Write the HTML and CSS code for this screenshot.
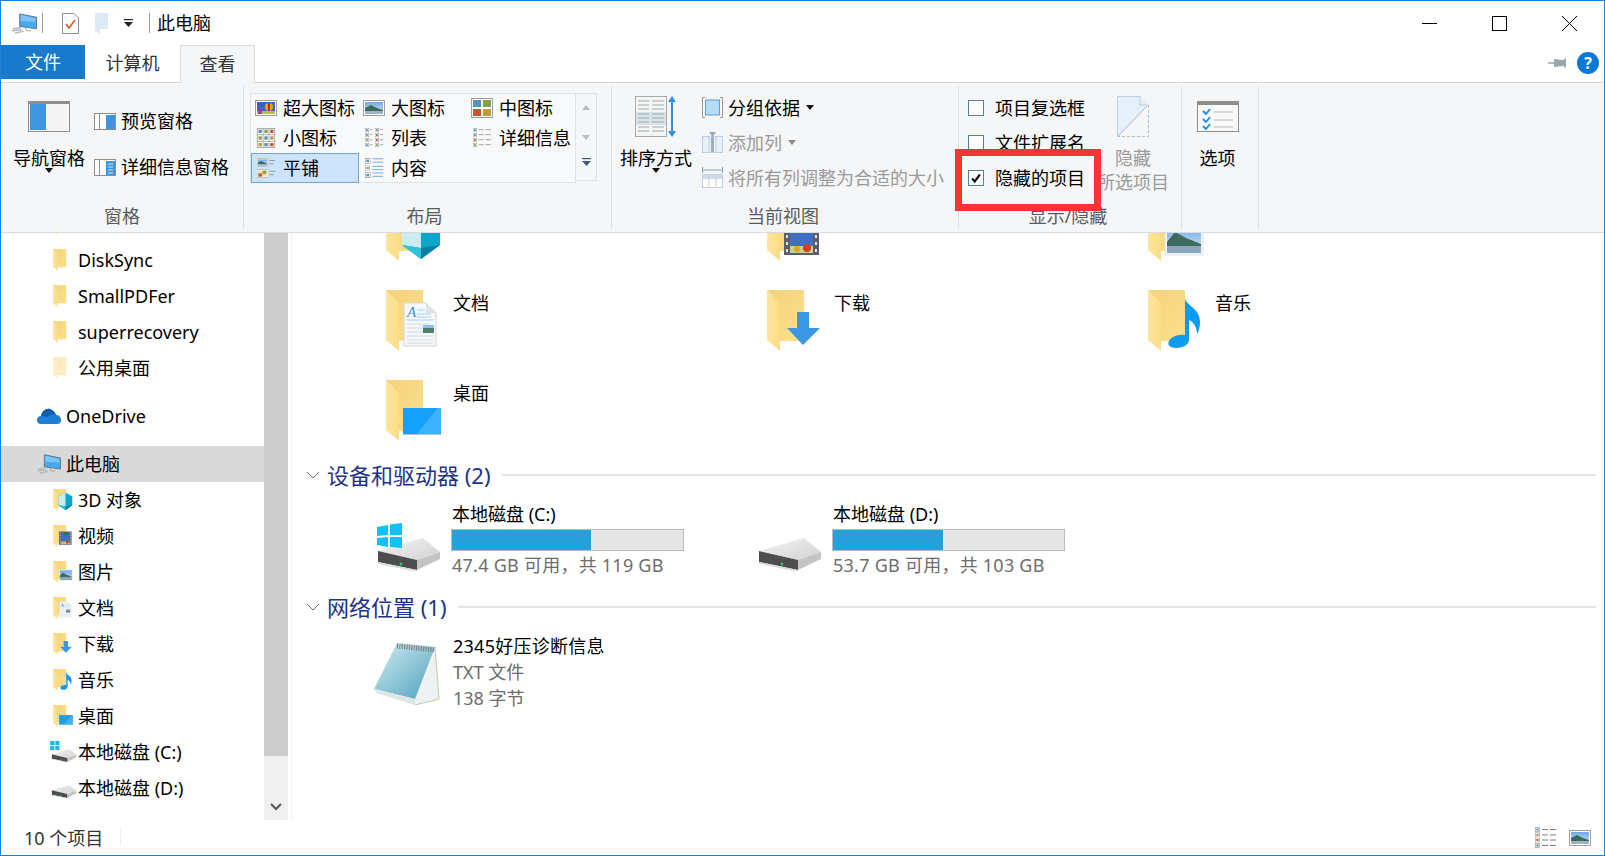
FILE: index.html
```html
<!DOCTYPE html>
<html lang="zh-CN">
<head>
  <meta charset="UTF-8" />
  <title>此电脑</title>
  <link rel="stylesheet" href="styles.css">
</head>
<body>
  <svg class="sprites" aria-hidden="true">
    <defs>
      <linearGradient id="fback" x1="0" y1="0" x2="1" y2="1"><stop offset="0" stop-color="#f6d27a"/><stop offset="1" stop-color="#fbdf8e"/></linearGradient>
      <linearGradient id="fflap" x1="0" y1="0" x2="1" y2="0"><stop offset="0" stop-color="#fee69f"/><stop offset="1" stop-color="#fcdc86"/></linearGradient>
      <linearGradient id="sky" x1="0" y1="0" x2="0" y2="1"><stop offset="0" stop-color="#6fa9ea"/><stop offset="1" stop-color="#d9e8f2"/></linearGradient>
      <linearGradient id="note" x1="0" y1="0" x2="1" y2="1"><stop offset="0" stop-color="#d4eef3"/><stop offset="1" stop-color="#4f9fbd"/></linearGradient>
      <linearGradient id="hddtop" x1="0" y1="0" x2="1" y2="1"><stop offset="0" stop-color="#f4f4f4"/><stop offset="1" stop-color="#d2d2d2"/></linearGradient>

      <g id="fb">
        <rect x="0" y="0" width="37" height="51" fill="url(#fback)"/>
        <polygon points="0,0 13,13 13,61 0,50" fill="url(#fflap)"/>
      </g>
      <symbol id="f-plain" viewBox="0 0 70 64"><use href="#fb"/></symbol>
      <symbol id="f-3d" viewBox="0 0 70 64"><use href="#fb"/>
        <polygon points="16,20 35,10 54,20 54,45 35,59 16,45" fill="#0aa6cc"/>
        <polygon points="16,20 35,10 35,48 16,45" fill="#c9eef2"/>
        <polygon points="16,45 35,48 35,59" fill="#2fc4da"/>
        <polygon points="54,45 35,48 35,59" fill="#0d7fa0"/>
      </symbol>
      <symbol id="f-video" viewBox="0 0 70 64"><use href="#fb"/>
        <rect x="17" y="18" width="35" height="37" fill="#5b5f66"/>
        <rect x="23" y="20" width="23" height="33" fill="#3f6fc4"/>
        <rect x="23" y="46" width="23" height="7" fill="#c9d28a"/>
        <circle cx="40" cy="48" r="4" fill="#d83c22"/>
        <circle cx="30" cy="49" r="3" fill="#e8a020"/>
        <circle cx="36" cy="24" r="5" fill="#2f6d33"/>
        <path d="M19 21h2v3h-2zM19 28h2v3h-2zM19 35h2v3h-2zM19 42h2v3h-2zM19 49h2v3h-2zM48 21h2v3h-2zM48 28h2v3h-2zM48 35h2v3h-2zM48 42h2v3h-2zM48 49h2v3h-2z" fill="#e3e3e3"/>
      </symbol>
      <symbol id="f-pic" viewBox="0 0 70 64"><use href="#fb"/>
        <rect x="17" y="24" width="38" height="31" fill="#f2f4f6" stroke="#dfe3e6"/>
        <rect x="19" y="26" width="34" height="27" fill="url(#sky)"/>
        <polygon points="19,42 27,32 38,38 53,44 53,46 19,46" fill="#3e6c5c"/>
        <rect x="19" y="46" width="34" height="7" fill="#8ea6bd"/>
      </symbol>
      <symbol id="f-doc" viewBox="0 0 70 64"><use href="#fb"/>
        <polygon points="18,13 40,13 50,23 50,56 18,56" fill="#f5f7f9" stroke="#d3d6da"/>
        <polygon points="40,13 50,23 40,23" fill="#dfe3e6"/>
        <text x="21" y="27" class="doc-letter">A</text>
        <path d="M21 30h26M31 20h8M31 24h14M31 27h14" stroke="#a9d3f2" fill="none"/>
        <path d="M21 34h22M21 38h20M21 42h20M21 46h26M21 50h26M21 53h26" stroke="#d5dade" fill="none"/>
        <rect x="37" y="35" width="11" height="8" fill="#4f7f6a"/>
        <rect x="37" y="35" width="11" height="3" fill="#8fc0ea"/>
      </symbol>
      <symbol id="f-down" viewBox="0 0 70 64"><use href="#fb"/>
        <polygon points="30,22 42,22 42,38 53,38 36,55 20,38 30,38" fill="#3a97e3"/>
      </symbol>
      <symbol id="f-music" viewBox="0 0 70 64"><use href="#fb"/>
        <path d="M37 8C38 16 52 18 52 32C52 36 51 41 49 44C49 36 44 31 41 30L41 50C41 55 34 58 28 58C22 58 19 55 21 51C23 47 30 44 37 45Z" fill="#0c9bee"/>
      </symbol>
      <symbol id="f-desk" viewBox="0 0 70 64"><use href="#fb"/>
        <rect x="17" y="28" width="38" height="27" fill="#15a0fb"/>
        <polygon points="30,55 52,28 55,28 55,55" fill="#3fb2fd"/>
        <rect x="17" y="54" width="38" height="1" fill="#aebfd2"/>
      </symbol>

      <symbol id="pc" viewBox="0 0 26 21">
        <polygon points="8,0.500 25.500,4 25.500,16 8,13.500" fill="#45a9f0" stroke="#5f7384" stroke-width="1"/>
        <polygon points="9,1.500 24.500,5 24.500,9 9,8" fill="#7cc5f6"/>
        <path d="M1 16l8-1M0 18l10-1M3 20.500l9-2" stroke="#b3b9be" stroke-width="1.500" fill="none"/>
        <path d="M14 15l1 3 5 0" stroke="#9aa3aa" fill="none"/>
      </symbol>
      <symbol id="hdd" viewBox="0 0 64 34">
        <polygon points="1,13 46,0 63,14 40,22" fill="url(#hddtop)"/>
        <polygon points="40,22 63,14 63,21 40,32" fill="#c4c4c4"/>
        <polygon points="1,13 40,22 40,32 1,24" fill="#4b4d4f"/>
        <polygon points="1,24 40,32 40,34 1,26" fill="#dcdcdc"/>
        <circle cx="24" cy="26" r="1.400" fill="#39c46a"/>
      </symbol>

      <symbol id="pic" viewBox="0 0 22 16">
        <rect x="0.500" y="0.500" width="21" height="15" fill="#fff" stroke="#a0a0a0"/>
        <rect x="2" y="2" width="18" height="12" fill="url(#sky)"/>
        <polygon points="2,8 8,5 14,8 20,10 20,11 2,11" fill="#3e6c5c"/>
        <rect x="2" y="11" width="18" height="3" fill="#9db3c6"/>
      </symbol>
      <symbol id="pic-warm" viewBox="0 0 22 16">
        <rect x="0.500" y="0.500" width="21" height="15" fill="#fff" stroke="#a0a0a0"/>
        <rect x="2" y="2" width="18" height="12" fill="#e8e4b0"/>
        <rect x="3" y="8" width="7" height="6" fill="#c8552c"/>
        <rect x="11" y="3" width="7" height="6" fill="#86a04c"/>
      </symbol>
      <symbol id="dot" viewBox="0 0 7 7">
        <rect x="0.500" y="0.500" width="6" height="6" fill="#fff" stroke="#a0a0a0"/>
        <rect x="2" y="2" width="3" height="3" fill="#5d8fb0"/>
      </symbol>
      <symbol id="dot-r" viewBox="0 0 7 7">
        <rect x="0.500" y="0.500" width="6" height="6" fill="#fff" stroke="#a0a0a0"/>
        <rect x="2" y="2" width="3" height="3" fill="#c8552c"/>
      </symbol>
      <symbol id="dot-g" viewBox="0 0 7 7">
        <rect x="0.500" y="0.500" width="6" height="6" fill="#fff" stroke="#a0a0a0"/>
        <rect x="2" y="2" width="3" height="3" fill="#86a04c"/>
      </symbol>
    </defs>
  </svg>

  <div class="window">
    <header class="titlebar">
      <svg class="qa-pc"><use href="#pc"/></svg>
      <span class="qa-sep"></span>
      <svg class="qa-doc" viewBox="0 0 17 21">
        <polygon points="0.500,0.500 12,0.500 16.500,5 16.500,20.500 0.500,20.500" fill="#fff" stroke="#8d8d8d"/>
        <path d="M4 11l3 4 6-8" stroke="#e2561e" stroke-width="1.600" fill="none"/>
      </svg>
      <svg class="qa-folder" viewBox="0 0 13 21">
        <polygon points="0,0 13,0 13,16 5,16 5,21 0,18" fill="#dfe8f5"/>
      </svg>
      <svg class="qa-drop" viewBox="0 0 9 8">
        <rect x="0" y="0" width="9" height="1.200" fill="#222"/>
        <polygon points="0,3 9,3 4.500,8" fill="#222"/>
      </svg>
      <span class="qa-sep qa-sep-2"></span>
      <span class="title-text">此电脑</span>
      <div class="win-controls">
        <button class="win-btn"><svg viewBox="0 0 15 15"><path d="M0 7.500h15" stroke="#000" fill="none"/></svg></button>
        <button class="win-btn"><svg viewBox="0 0 15 15"><rect x="0.500" y="0.500" width="14" height="14" stroke="#000" fill="none"/></svg></button>
        <button class="win-btn"><svg viewBox="0 0 15 15"><path d="M0 0l15 15M15 0L0 15" stroke="#000" fill="none"/></svg></button>
      </div>
    </header>

    <nav class="tabs">
      <div class="tab tab-file">文件</div>
      <div class="tab tab-plain">计算机</div>
      <div class="tab tab-active">查看</div>
      <div class="tabs-right">
        <svg class="pin" viewBox="0 0 18 10">
          <path d="M0 5h8" stroke="#9aa5a8" stroke-width="1.500"/>
          <polygon points="6,1 15,2 18,0 18,10 15,8 6,9" fill="#9aa8ab"/>
        </svg>
        <span class="help">?</span>
      </div>
    </nav>

    <section class="ribbon">
      <div class="group group-pane">
        <div class="group-body">
          <div class="big-btn pane-btn">
            <svg class="ic-nav" viewBox="0 0 42 31">
              <rect x="0.500" y="0.500" width="41" height="30" fill="#f5f5f5" stroke="#8e8e8e"/>
              <rect x="1" y="1" width="40" height="2" fill="#8e8e8e"/>
              <rect x="2" y="3" width="16" height="26" fill="#3f94e0"/>
            </svg>
            <span class="big-label">导航窗格</span>
            <span class="caret caret-under"></span>
          </div>
          <div class="pane-col">
            <div class="row"><svg class="ic-pane" viewBox="0 0 22 17"><rect x="0.500" y="0.500" width="21" height="16" fill="#fff" stroke="#8e8e8e"/><rect x="5" y="1" width="1" height="15" fill="#8e8e8e"/><rect x="12" y="2" width="9" height="14" fill="#3f94e0"/></svg><span>预览窗格</span></div>
            <div class="row"><svg class="ic-pane" viewBox="0 0 22 17"><rect x="0.500" y="0.500" width="21" height="16" fill="#fff" stroke="#8e8e8e"/><rect x="5" y="1" width="1" height="15" fill="#8e8e8e"/><rect x="12" y="2" width="9" height="14" fill="#3f94e0"/><path d="M14 5h5M14 8h5M14 11h5M14 14h5" stroke="#d5e8f8"/></svg><span>详细信息窗格</span></div>
          </div>
        </div>
        <div class="group-label">窗格</div>
      </div>

      <div class="group group-layout">
        <div class="group-body">
          <div class="gallery">
            <div class="g-item">
              <svg class="ic-g" viewBox="0 0 22 16"><rect x="0.500" y="0.500" width="21" height="15" fill="#fff" stroke="#a0a0a0"/><rect x="2" y="2" width="18" height="12" fill="#3a62c0"/><rect x="2" y="11" width="18" height="3" fill="#b8c04c"/><circle cx="14" cy="7" r="4" fill="#e8a020"/><rect x="13" y="3" width="2" height="8" fill="#b52a1c"/><rect x="3" y="9" width="4" height="5" fill="#9b3fa8"/></svg>
              <span>超大图标</span>
            </div>
            <div class="g-item"><svg class="ic-g"><use href="#pic"/></svg><span>大图标</span></div>
            <div class="g-item">
              <svg class="ic-g" viewBox="0 0 22 20">
                <rect x="0.500" y="0.500" width="21" height="19" fill="#fff" stroke="#a0a0a0"/>
                <rect x="2" y="2" width="8" height="7" fill="#5d8fb0"/><rect x="12" y="2" width="8" height="7" fill="#86a04c"/>
                <rect x="2" y="11" width="8" height="7" fill="#c8552c"/><rect x="12" y="11" width="8" height="7" fill="#c59a3c"/>
              </svg>
              <span>中图标</span>
            </div>
            <div class="g-item">
              <svg class="ic-g" viewBox="0 0 22 24">
                <rect x="0.500" y="0.500" width="21" height="23" fill="#fff" stroke="#a0a0a0"/>
                <path d="M7.500 0v24M14.500 0v24M0 8h22M0 16h22" stroke="#a0a0a0"/>
                <rect x="2" y="2" width="4" height="4" fill="#5d8fb0"/><rect x="9" y="2" width="4" height="4" fill="#86a04c"/><rect x="16" y="2" width="4" height="4" fill="#c8552c"/>
                <rect x="2" y="10" width="4" height="4" fill="#86a04c"/><rect x="9" y="10" width="4" height="4" fill="#5d8fb0"/><rect x="16" y="10" width="4" height="4" fill="#c59a3c"/>
                <rect x="2" y="18" width="4" height="4" fill="#c59a3c"/><rect x="9" y="18" width="4" height="4" fill="#5d8fb0"/><rect x="16" y="18" width="4" height="4" fill="#c8552c"/>
              </svg>
              <span>小图标</span>
            </div>
            <div class="g-item">
              <svg class="ic-g" viewBox="0 0 22 24">
                <use href="#dot" x="0" y="0" width="5" height="5"/><use href="#dot" x="0" y="6" width="5" height="5"/><use href="#dot-g" x="0" y="12" width="5" height="5"/><use href="#dot" x="0" y="18" width="5" height="5"/>
                <path d="M6 2h3M6 8h3M6 14h3M6 20h3M18 2h4M18 8h4M18 14h4M18 20h4" stroke="#9a9a9a"/>
                <use href="#dot" x="12" y="0" width="5" height="5"/><use href="#dot-r" x="12" y="6" width="5" height="5"/><use href="#dot-r" x="12" y="12" width="5" height="5"/><use href="#dot-g" x="12" y="18" width="5" height="5"/>
              </svg>
              <span>列表</span>
            </div>
            <div class="g-item">
              <svg class="ic-g" viewBox="0 0 22 24">
                <use href="#dot" x="0" y="0" width="5" height="5"/><use href="#dot" x="0" y="6" width="5" height="5"/><use href="#dot-r" x="0" y="12" width="5" height="5"/><use href="#dot-g" x="0" y="18" width="5" height="5"/>
                <path d="M7 2h6M15 2h7M7 8h6M15 8h7M7 14h6M15 14h7M7 20h6M15 20h7" stroke="#9a9a9a"/>
              </svg>
              <span>详细信息</span>
            </div>
            <div class="g-item g-selected">
              <svg class="ic-g" viewBox="0 0 22 24">
                <use href="#pic" x="0" y="0" width="14" height="11"/><use href="#pic-warm" x="0" y="13" width="14" height="11"/>
                <path d="M15 3h7M15 7h5M15 16h7M15 20h5" stroke="#8a8a8a"/>
              </svg>
              <span>平铺</span>
            </div>
            <div class="g-item">
              <svg class="ic-g" viewBox="0 0 22 24">
                <use href="#dot" x="0" y="0" width="7" height="7"/><use href="#dot-g" x="0" y="9" width="7" height="6"/><use href="#dot" x="0" y="17" width="7" height="7"/>
                <path d="M9 1h13M9 5h13M9 10h13M9 14h13M9 18h13M9 22h13" stroke="#5f9be8"/>
              </svg>
              <span>内容</span>
            </div>
          </div>
          <div class="gallery-scroll">
            <span class="tri tri-up"></span>
            <span class="tri tri-down"></span>
            <svg class="tri-more" viewBox="0 0 9 8"><rect x="0" y="0" width="9" height="1.200" fill="#3f5a80"/><polygon points="0,3 9,3 4.500,8" fill="#3f5a80"/></svg>
          </div>
        </div>
        <div class="group-label">布局</div>
      </div>

      <div class="group group-view">
        <div class="group-body">
          <div class="big-btn sort-btn">
            <svg class="ic-sort" viewBox="0 0 42 41">
              <rect x="0.500" y="0.500" width="31" height="40" fill="#f4f6f6" stroke="#a8a8a8"/>
              <rect x="1" y="16" width="30" height="13" fill="#d7e3e6"/>
              <path d="M3 5h11M17 5h12M3 9h11M17 9h12M3 13h11M17 13h12M3 18h11M17 18h12M3 22h11M17 22h12M3 26h11M17 26h12M3 31h11M17 31h12M3 35h11M17 35h12" stroke="#a4a8aa"/>
              <path d="M37 3v35" stroke="#2f8fe0" stroke-width="2"/>
              <polygon points="37,0 41,6 33,6" fill="#2f8fe0"/><polygon points="37,41 41,35 33,35" fill="#2f8fe0"/>
            </svg>
            <span class="big-label">排序方式</span>
            <span class="caret caret-under"></span>
          </div>
          <div class="view-col">
            <div class="row">
              <svg class="ic-view" viewBox="0 0 21 21"><path d="M3 .5H.5v20H3M18 .5h2.500v20H18" stroke="#9a9a9a" fill="none"/><rect x="3.500" y="3" width="14" height="15" fill="#b5dcf8" stroke="#5a9fd8"/></svg>
              <span>分组依据</span><span class="caret caret-inline"></span>
            </div>
            <div class="row row-off">
              <svg class="ic-view" viewBox="0 0 21 21"><rect x="0.500" y="4.500" width="20" height="16" fill="#e8f0f8" stroke="#bcd0e4"/><path d="M7 5v15M14 5v15" stroke="#bcd0e4"/><rect x="9" y="5" width="3" height="15" fill="#a4adb8"/><polygon points="7,0 14,0 10.500,5" fill="#9aa7b4"/></svg>
              <span>添加列</span><span class="caret caret-inline caret-off"></span>
            </div>
            <div class="row row-off">
              <svg class="ic-view" viewBox="0 0 21 21"><path d="M1 3h19" stroke="#8aa0b4"/><path d="M.5 0v6M20.500 0v6" stroke="#8aa0b4"/><rect x="0.500" y="7.500" width="20" height="13" fill="#fff" stroke="#bcd0e4"/><rect x="1" y="8" width="19" height="4" fill="#cfdcea"/><path d="M7 8v12M14 8v12" stroke="#bcd0e4"/></svg>
              <span>将所有列调整为合适的大小</span>
            </div>
          </div>
        </div>
        <div class="group-label">当前视图</div>
      </div>

      <div class="group group-show">
        <div class="group-body">
          <div class="check-col">
            <div class="row"><span class="check"></span><span>项目复选框</span></div>
            <div class="row"><span class="check"></span><span>文件扩展名</span></div>
            <div class="row"><span class="check"><svg viewBox="0 0 16 16"><path d="M3.500 8.500l3 3.500 6-8" stroke="#111" stroke-width="2.400" fill="none"/></svg></span><span>隐藏的项目</span></div>
          </div>
          <div class="big-btn hide-btn">
            <svg class="ic-hide" viewBox="0 0 32 41">
              <polygon points="0.500,0.500 23,0.500 31.500,9 31.500,40.500 0.500,40.500" fill="#e6f0fa"/>
              <path d="M23 .5V9h8.500" stroke="#c4cdd6" fill="none"/>
              <polygon points="31,10 31,40 2,40" fill="#f5f6f7"/>
              <path d="M31.500 9v31.500H1" stroke="#b4bcc6" stroke-dasharray="3 2" fill="none"/>
              <path d="M.5 40.500V.5H23" stroke="#bcd0e4" fill="none"/>
              <path d="M30 10L1 40" stroke="#b4bcc6" fill="none"/>
            </svg>
            <span class="big-label label-off">隐藏</span>
            <span class="big-label label-off">所选项目</span>
          </div>
          <div class="red-box"></div>
        </div>
        <div class="group-label">显示/隐藏</div>
      </div>

      <div class="group group-opt">
        <div class="group-body">
          <div class="big-btn opt-btn">
            <svg class="ic-opt" viewBox="0 0 42 31">
              <rect x="0.500" y="0.500" width="41" height="30" fill="#f8f8f8" stroke="#8e8e8e"/>
              <rect x="1" y="1" width="40" height="3" fill="#8e8e8e"/>
              <path d="M6 10l3 3 4-5M6 18l3 3 4-5M6 25l3 3 4-5" stroke="#2f8fe0" stroke-width="2" fill="none"/>
              <path d="M17 11h19M17 19h19M17 26h19" stroke="#b8b8b8"/>
            </svg>
            <span class="big-label">选项</span>
          </div>
        </div>
      </div>
    </section>

    <div class="body">
      <aside class="sidebar">
        <ul class="tree">
          <li class="node"><svg class="ic-small"><use href="#f-plain"/></svg></li>
          <li class="node"><svg class="ic-small"><use href="#f-plain"/></svg>DiskSync</li>
          <li class="node"><svg class="ic-small"><use href="#f-plain"/></svg>SmallPDFer</li>
          <li class="node"><svg class="ic-small"><use href="#f-plain"/></svg>superrecovery</li>
          <li class="node"><svg class="ic-small ic-faded"><use href="#f-plain"/></svg>公用桌面</li>
          <li class="node node-root node-cloud">
            <svg class="ic-root" viewBox="0 0 24 16">
              <path d="M4 16C1 16 0 14 0 12C0 9 2 8 4 8C5 3 9 0 13 1C16 2 18 4 19 7C22 7 24 9 24 12C24 14 23 16 20 16Z" fill="#1b80d6"/>
              <path d="M4 8C5 3 9 0 13 1C16 2 18 4 19 7C15 6 12 7 11 9C8 8 6 8 4 8Z" fill="#0f5fae"/>
            </svg>OneDrive
          </li>
          <li class="node node-root node-pc"><svg class="ic-root"><use href="#pc"/></svg>此电脑</li>
          <li class="node"><svg class="ic-small"><use href="#f-3d"/></svg>3D 对象</li>
          <li class="node"><svg class="ic-small"><use href="#f-video"/></svg>视频</li>
          <li class="node"><svg class="ic-small"><use href="#f-pic"/></svg>图片</li>
          <li class="node"><svg class="ic-small"><use href="#f-doc"/></svg>文档</li>
          <li class="node"><svg class="ic-small"><use href="#f-down"/></svg>下载</li>
          <li class="node"><svg class="ic-small"><use href="#f-music"/></svg>音乐</li>
          <li class="node"><svg class="ic-small"><use href="#f-desk"/></svg>桌面</li>
          <li class="node node-drive">
            <svg class="ic-drive" viewBox="0 0 24 20"><use href="#hdd" x="1" y="7" width="22" height="12"/><rect x="0" y="0" width="3.600" height="3.600" fill="#16b6f0"/><rect x="4.400" y="0" width="3.600" height="3.600" fill="#16b6f0"/><rect x="0" y="4.400" width="3.600" height="3.600" fill="#16b6f0"/><rect x="4.400" y="4.400" width="3.600" height="3.600" fill="#16b6f0"/></svg>本地磁盘 (C:)
          </li>
          <li class="node node-drive"><svg class="ic-drive" viewBox="0 0 24 20"><use href="#hdd" x="1" y="7" width="22" height="12"/></svg>本地磁盘 (D:)</li>
        </ul>
      </aside>
      <div class="scrollbar">
        <div class="thumb"></div>
        <svg class="scroll-arrow" viewBox="0 0 12 8"><path d="M1 1l5 5 5-5" stroke="#555" stroke-width="2" fill="none"/></svg>
      </div>

      <main class="content">
        <div class="tiles">
          <div class="tile"><svg class="ic-tile"><use href="#f-3d"/></svg></div>
          <div class="tile"><svg class="ic-tile"><use href="#f-video"/></svg></div>
          <div class="tile"><svg class="ic-tile"><use href="#f-pic"/></svg></div>
          <div class="tile"><svg class="ic-tile"><use href="#f-doc"/></svg><span>文档</span></div>
          <div class="tile"><svg class="ic-tile"><use href="#f-down"/></svg><span>下载</span></div>
          <div class="tile"><svg class="ic-tile"><use href="#f-music"/></svg><span>音乐</span></div>
          <div class="tile"><svg class="ic-tile"><use href="#f-desk"/></svg><span>桌面</span></div>
        </div>

        <div class="sec-head sec-drives">
          <svg class="chev" viewBox="0 0 14 8"><path d="M1 1l6 6 6-6" stroke="#6d6d6d" fill="none"/></svg>
          <span>设备和驱动器 (2)</span>
          <i class="sec-line"></i>
        </div>
        <div class="drives">
          <div class="drive">
            <svg class="ic-hdd" viewBox="0 0 64 48">
              <use href="#hdd" x="0" y="15" width="64" height="34"/>
              <polygon points="0,4 11,2 11,12 0,13" fill="#12c0f5"/><polygon points="13,1.500 25,0 25,12 13,12" fill="#12c0f5"/>
              <polygon points="0,15 11,14 11,24 0,22" fill="#12c0f5"/><polygon points="13,14 25,14 25,25 13,24" fill="#12c0f5"/>
            </svg>
            <div class="drive-info">
              <div class="drive-name">本地磁盘 (C:)</div>
              <div class="bar"><div class="bar-fill" style="width: 60%"></div></div>
              <div class="drive-free">47.4 GB 可用，共 119 GB</div>
            </div>
          </div>
          <div class="drive">
            <svg class="ic-hdd" viewBox="0 0 64 48"><use href="#hdd" x="0" y="15" width="64" height="34"/></svg>
            <div class="drive-info">
              <div class="drive-name">本地磁盘 (D:)</div>
              <div class="bar"><div class="bar-fill" style="width: 47.500%"></div></div>
              <div class="drive-free">53.7 GB 可用，共 103 GB</div>
            </div>
          </div>
        </div>

        <div class="sec-head sec-net">
          <svg class="chev" viewBox="0 0 14 8"><path d="M1 1l6 6 6-6" stroke="#6d6d6d" fill="none"/></svg>
          <span>网络位置 (1)</span>
          <i class="sec-line"></i>
        </div>
        <div class="file">
          <svg class="ic-note" viewBox="0 0 66 62">
            <polygon points="61,4 65,56 41,62 38,52" fill="#eef2f2" stroke="#c7c7a8"/>
            <polygon points="23,0 61,4 41,56 0,46" fill="url(#note)"/>
            <polygon points="0,46 41,56 41,62 2,50" fill="#dfe6e6"/>
            <path d="M23 3L61 7" stroke="#777" stroke-width="5" stroke-dasharray="1 1.400"/>
          </svg>
          <div class="file-info">
            <div class="file-name">2345好压诊断信息</div>
            <div class="file-meta">TXT 文件</div>
            <div class="file-meta">138 字节</div>
          </div>
        </div>
      </main>
    </div>

    <footer class="statusbar">
      <span class="status-count">10 个项目</span>
      <span class="status-sep"></span>
      <div class="status-views">
        <svg class="sv-details" viewBox="0 0 21 21">
          <use href="#dot" x="0" y="0" width="5" height="5"/><use href="#dot-g" x="0" y="5.300" width="5" height="5"/><use href="#dot-r" x="0" y="10.600" width="5" height="5"/><use href="#dot" x="0" y="16" width="5" height="5"/>
          <path d="M7 2.500h6M15 2.500h6M7 8h6M15 8h6M7 13h6M15 13h6M7 18.500h6M15 18.500h6" stroke="#808080"/>
        </svg>
        <svg class="sv-large"><use href="#pic"/></svg>
      </div>
    </footer>
  </div>
</body>
</html>
```

FILE: styles.css
```css
* {
  box-sizing: border-box;
}
html, body {
  margin: 0;
  height: 100%;
}
body {
  font-family: "Noto Sans", "Noto Sans CJK SC", sans-serif;
  font-size: 18px;
  line-height: 24px;
  color: #000;
  background: #fff;
  overflow: hidden;
}
svg {
  display: block;
  flex: none;
}
.sprites {
  position: absolute;
  width: 0;
  height: 0;
}
.doc-letter {
  font-family: "Liberation Serif", serif;
  font-size: 15px;
  font-style: italic;
  fill: #3b93dc;
}
.window {
  display: flex;
  flex-direction: column;
  height: 856px;
  border: 1px solid #1883d7;
}

/* title bar */
.titlebar {
  display: flex;
  align-items: center;
  height: 44px;
  flex: none;
  padding-left: 11px;
}
.qa-pc {
  width: 25px;
  height: 21px;
}
.qa-sep {
  width: 1px;
  height: 20px;
  background: #9a9a9a;
  margin-left: 5px;
}
.qa-doc {
  width: 17px;
  height: 21px;
  margin-left: 19px;
}
.qa-folder {
  width: 13px;
  height: 21px;
  margin-left: 16px;
}
.qa-drop {
  width: 9px;
  height: 8px;
  margin-left: 16px;
}
.qa-sep-2 {
  margin-left: 16px;
}
.title-text {
  margin-left: 7px;
}
.win-controls {
  display: flex;
  margin-left: auto;
}
.win-btn {
  display: flex;
  align-items: center;
  justify-content: center;
  width: 70px;
  height: 44px;
  padding: 0;
  border: none;
  background: none;
}
.win-btn svg {
  width: 15px;
  height: 15px;
}

/* tabs */
.tabs {
  display: flex;
  align-items: flex-start;
  height: 37px;
  flex: none;
}
.tab {
  text-align: center;
  color: #333;
}
.tab-file {
  width: 84px;
  height: 34px;
  line-height: 34px;
  background: #1979ca;
  color: #fff;
}
.tab-plain {
  width: 95px;
  line-height: 36px;
}
.tab-active {
  width: 75px;
  height: 38px;
  line-height: 36px;
  background: #f5f6f7;
  border: 1px solid #dadbdc;
  border-bottom: none;
  position: relative;
  z-index: 1;
}
.tabs-right {
  display: flex;
  align-items: center;
  margin-left: auto;
  height: 36px;
  padding-right: 5px;
}
.pin {
  width: 18px;
  height: 10px;
  margin-right: 11px;
}
.help {
  width: 22px;
  height: 22px;
  border-radius: 50%;
  background: #0a78d7;
  color: #fff;
  font-size: 16px;
  font-weight: bold;
  line-height: 22px;
  text-align: center;
}

/* ribbon */
.ribbon {
  display: flex;
  height: 151px;
  flex: none;
  padding-top: 3px;
  background: #f5f6f7;
  border-top: 1px solid #dadbdc;
  border-bottom: 1px solid #dadbdc;
}
.group {
  display: flex;
  flex-direction: column;
  height: 143px;
  border-right: 1px solid #dfe1e3;
}
.group-pane { width: 243px; }
.group-layout { width: 368px; }
.group-view { width: 347px; }
.group-show { width: 223px; }
.group-opt { width: 77px; }
.group-body {
  display: flex;
  position: relative;
  height: 118px;
}
.group-label {
  text-align: center;
  color: #5c5c5c;
}
.group-layout .group-label {
  padding-right: 6px;
}
.group-view .group-label,
.group-show .group-label {
  padding-right: 4px;
}
.row {
  display: flex;
  align-items: center;
  white-space: nowrap;
}
.big-btn {
  display: flex;
  flex-direction: column;
  align-items: center;
  width: 72px;
  white-space: nowrap;
}
.caret {
  width: 0;
  height: 0;
  border-left: 4px solid transparent;
  border-right: 4px solid transparent;
  border-top: 5px solid #111;
}
.caret-under {
  margin-top: -2px;
}
.caret-inline {
  margin-left: 6px;
}
.caret-off {
  border-top-color: #8c8c8c;
}

.pane-btn {
  margin-left: 12px;
}
.ic-nav {
  width: 42px;
  height: 31px;
  margin-top: 15px;
  margin-bottom: 14px;
}
.pane-col {
  display: flex;
  flex-direction: column;
  gap: 22px;
  margin-left: 9px;
  padding-top: 23px;
}
.ic-pane {
  width: 22px;
  height: 17px;
  margin-right: 5px;
}

/* layout gallery */
.group-layout .group-body {
  padding: 7px 0 0 6px;
}
.gallery {
  display: grid;
  grid-template-columns: repeat(3, 108px);
  grid-auto-rows: 30px;
  width: 326px;
  height: 90px;
  padding: 0 1px;
  background: #f8f9fb;
  box-shadow: inset 0 0 0 1px #dfe1e3;
}
.g-item {
  display: flex;
  align-items: center;
  padding-left: 4px;
  white-space: nowrap;
}
.ic-g {
  width: 22px;
  height: 20px;
  margin-right: 6px;
}
.g-selected {
  background: #cce4fb;
  outline: 1px solid #6ea5dc;
  outline-offset: -1px;
}
.gallery-scroll {
  display: flex;
  flex-direction: column;
  align-items: center;
  width: 21px;
  height: 88px;
  border: 1px solid #dfe1e3;
  border-left: none;
}
.tri {
  width: 0;
  height: 0;
  border-left: 4px solid transparent;
  border-right: 4px solid transparent;
}
.tri-up {
  margin-top: 11px;
  border-bottom: 5px solid #b9bcc0;
}
.tri-down {
  margin-top: 25px;
  border-top: 5px solid #b9bcc0;
}
.tri-more {
  width: 9px;
  height: 8px;
  margin-top: 18px;
}

/* current view */
.sort-btn {
  margin-left: 8px;
}
.ic-sort {
  width: 42px;
  height: 41px;
  margin-top: 10px;
  margin-bottom: 9px;
}
.view-col {
  display: flex;
  flex-direction: column;
  margin-left: 10px;
  padding-top: 4px;
}
.view-col .row,
.check-col .row {
  height: 35px;
}
.ic-view {
  width: 21px;
  height: 21px;
  margin-right: 5px;
}
.row-off {
  color: #9a9a9a;
}

/* show / hide */
.check-col {
  display: flex;
  flex-direction: column;
  width: 125px;
  margin-left: 9px;
  padding-top: 4px;
  flex: none;
}
.check {
  width: 16px;
  height: 16px;
  margin-right: 11px;
  background: #fff;
  border: 1px solid #5b7ba8;
}
.check svg {
  width: 14px;
  height: 14px;
}
.hide-btn {
  width: 80px;
}
.ic-hide {
  width: 32px;
  height: 41px;
  margin-top: 10px;
  margin-bottom: 9px;
}
.label-off {
  color: #9a9a9a;
}
.red-box {
  position: absolute;
  left: -4px;
  top: 63px;
  width: 146px;
  height: 62px;
  border: 7px solid #f93434;
}
.opt-btn {
  width: 71px;
}
.ic-opt {
  width: 42px;
  height: 31px;
  margin-top: 15px;
  margin-bottom: 14px;
}

/* main body */
.body {
  display: flex;
  flex: 1;
  min-height: 0;
}
.sidebar {
  width: 263px;
  flex: none;
  overflow: hidden;
}
.tree {
  list-style: none;
  margin: -27px 0 0;
  padding: 0;
}
.node {
  display: flex;
  align-items: center;
  height: 36px;
  padding-left: 52px;
}
.ic-small {
  width: 25px;
  height: 23px;
}
.ic-faded {
  opacity: 0.5;
}
.node-root {
  padding-left: 36px;
}
.node-cloud {
  margin-top: 12px;
}
.node-pc {
  margin-top: 12px;
  background: #d9d9d9;
}
.ic-root {
  width: 24px;
  height: 20px;
  margin-right: 5px;
}
.node-cloud .ic-root {
  height: 16px;
}
.node-drive {
  padding-left: 49px;
}
.ic-drive {
  width: 28px;
  height: 23px;
}
.scrollbar {
  position: relative;
  width: 24px;
  flex: none;
  background: #f0f0f0;
}
.thumb {
  height: 523px;
  background: #cdcdcd;
}
.scroll-arrow {
  width: 12px;
  height: 8px;
  margin: 47px auto 0;
}
.content {
  flex: 1;
  min-width: 0;
  margin-left: 3px;
  border-left: 1px solid #f0f0f0;
  overflow: hidden;
}
.tiles {
  display: grid;
  grid-template-columns: repeat(3, 381px);
  grid-auto-rows: 61px;
  row-gap: 29px;
  margin-top: -33px;
  padding-left: 94px;
}
.tile {
  display: flex;
  line-height: 26px;
}
.ic-tile {
  width: 70px;
  height: 64px;
  margin-right: -3px;
}
.sec-head {
  display: flex;
  align-items: center;
  height: 26px;
  padding: 0 8px 0 14px;
  font-size: 22px;
  line-height: 26px;
  color: #1e3287;
  white-space: nowrap;
}
.sec-drives {
  margin-top: 21px;
}
.sec-net {
  margin-top: 16px;
}
.chev {
  width: 14px;
  height: 8px;
  margin-right: 7px;
}
.sec-line {
  flex: 1;
  height: 2px;
  margin-left: 11px;
  background: #e5e5e5;
}
.drives {
  display: grid;
  grid-template-columns: repeat(2, 381px);
  margin-top: 13px;
  padding-left: 85px;
}
.drive {
  display: flex;
}
.ic-hdd {
  width: 64px;
  height: 48px;
  margin: 22px 10px 0 0;
}
.drive-info {
  width: 233px;
}
.drive-name,
.drive-free {
  line-height: 26px;
  margin-left: 1px;
}
.drive-free {
  letter-spacing: 0.25px;
}
.bar {
  height: 22px;
  margin: 2px 0 1px;
  background: #e6e6e6;
  border: 1px solid #bcbcbc;
}
.bar-fill {
  height: 100%;
  background: #26a0da;
}
.drive-free,
.file-meta {
  color: #6d6d6d;
}
.file {
  display: flex;
  margin-top: 13px;
  padding-left: 82px;
}
.ic-note {
  width: 66px;
  height: 62px;
  margin: 10px 13px 0 0;
}
.file-info {
  line-height: 26px;
}
.file-name {
  letter-spacing: 0.25px;
}

/* status bar */
.statusbar {
  display: flex;
  align-items: center;
  height: 35px;
  flex: none;
  padding-left: 23px;
  color: #333;
}
.status-count {
  width: 96px;
}
.status-sep {
  width: 1px;
  height: 17px;
  background: #eeeeee;
}
.status-views {
  display: flex;
  align-items: center;
  margin-left: auto;
  padding-right: 13px;
}
.sv-details {
  width: 21px;
  height: 21px;
}
.sv-large {
  width: 22px;
  height: 16px;
  margin-left: 13px;
}
```
